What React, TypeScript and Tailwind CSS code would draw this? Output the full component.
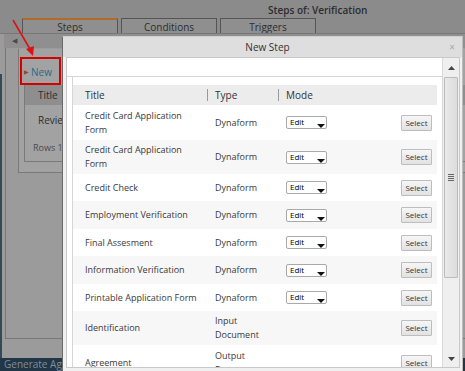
import React from "react";

const rows: { title: string[]; type: string[]; edit: boolean; h: number }[] = [
  { title: ["Credit Card Application", "Form"], type: ["Dynaform"], edit: true, h: 35 },
  { title: ["Credit Card Application", "Form"], type: ["Dynaform"], edit: true, h: 34 },
  { title: ["Credit Check"], type: ["Dynaform"], edit: true, h: 27 },
  { title: ["Employment Verification"], type: ["Dynaform"], edit: true, h: 28 },
  { title: ["Final Assesment"], type: ["Dynaform"], edit: true, h: 27 },
  { title: ["Information Verification"], type: ["Dynaform"], edit: true, h: 28 },
  { title: ["Printable Application Form"], type: ["Dynaform"], edit: true, h: 27 },
  { title: ["Identification"], type: ["Input", "Document"], edit: false, h: 34 },
  { title: ["Agreement"], type: ["Output", "Document"], edit: false, h: 36 },
];

function EditSelect() {
  return (
    <div className="relative w-[41px] h-[13px] border border-[#a9a9a9] rounded-[2px] bg-white">
      <span className="absolute left-[3px] top-[-1px] text-[8px] leading-[12px] text-black font-medium">Edit</span>
      <svg className="absolute left-[30px] top-[7px]" width="8" height="4" viewBox="0 0 8 4">
        <polygon points="0,0 8,0 4,4" fill="#111" />
      </svg>
    </div>
  );
}

function SelectBtn() {
  return (
    <div className="w-[31px] h-[16px] border border-[#bdbdbd] rounded-[1px] bg-gradient-to-b from-[#f6f6f6] to-[#e2e2e2] flex items-center justify-center text-[8px] text-[#333]">
      Select
    </div>
  );
}

export default function App() {
  return (
    <div
      className="relative w-[465px] h-[371px] overflow-hidden bg-[#8b8b8b] text-[#333]"
      style={{ fontFamily: '"Open Sans", "Noto Sans", sans-serif' }}
    >
      {/* background page (under overlay) */}
      <div className="flex flex-col h-full">
        <div className="h-[18px] shrink-0 pl-[268px] text-[10px] leading-[20px] font-semibold text-[#2d2d2d]">
          Steps of: Verification
        </div>
        <div className="h-[15px] shrink-0 flex pl-[22px] gap-[3px] items-end">
          <div className="w-[96px] h-[15px] border border-b-0 border-[#555] border-t-2 border-t-[#b26b27] bg-[#8f8f8f] text-center text-[10px] leading-[14px] text-[#2d2d2d]">
            Steps
          </div>
          <div className="w-[96px] h-[15px] border border-b-0 border-[#555] bg-[#8f8f8f] text-center text-[10px] leading-[16px] text-[#2d2d2d]">
            Conditions
          </div>
          <div className="w-[96px] h-[15px] border border-b-0 border-[#555] bg-[#8f8f8f] text-center text-[10px] leading-[16px] text-[#2d2d2d]">
            Triggers
          </div>
        </div>
        <div className="flex-1 flex bg-[#9b9b9b] border-t border-[#777]">
          <div className="w-[2px] flex flex-col">
            <div className="h-[40px]" />
            <div className="flex-1 bg-[#34495a]" />
          </div>
          <div className="flex-1 flex flex-col pl-[2px]">
            <div className="h-[14px] bg-[#8f8f8f] text-[7px] leading-[14px] pl-[8px] text-[#4a4a4a]">◀</div>
            <div className="ml-[1px] h-[291px] border-l border-b border-[#777] pl-[12px] pt-[1px]">
              <div className="h-[124px] border-l border-b border-[#7a7a7a] bg-[#a2a2a2] pl-[5px]">
                <div className="h-[36px] flex items-center pt-[10px] text-[10px] text-[#2b6a8c]">
                  <span className="text-[6px] text-[#8a4a2a] mr-[2px]">▶</span>New
                </div>
                <div className="h-[77px] border-l border-b border-[#7a7a7a]">
                  <div className="h-[20px] bg-[#8e8e8e] pl-[13px] text-[10px] leading-[20px] text-[#2d2d2d]">Title</div>
                  <div className="h-[30px] pl-[13px] text-[10px] leading-[30px] text-[#2d2d2d]">Review</div>
                  <div className="h-[26px] pl-[8px] text-[9px] leading-[26px] text-[#4a4a4a]">Rows 1-</div>
                </div>
              </div>
            </div>
          </div>
        </div>
        <div className="h-[13px] shrink-0 bg-[#213646] flex">
          <div className="w-[62px] overflow-hidden whitespace-nowrap text-[10px] leading-[12px] pl-[4px] text-[#7f8f99]">Generate Agreement</div>
        </div>
      </div>

      {/* annotation: red arrow */}
      <svg className="absolute left-0 top-0" width="60" height="60" viewBox="0 0 60 60">
        <line x1="13" y1="20" x2="30" y2="49" stroke="#d11" strokeWidth="1.6" />
        <polygon points="26,49 34,46 33,56" fill="#d11" />
      </svg>
      <div className="absolute left-[20px] top-[57px] w-[41px] h-[28px] border-2 border-[#d40000]" />

      {/* dialog */}
      <div className="absolute left-[62px] top-[36px] w-[401px] h-[340px] bg-[#f0f0f0] border-l border-[#6a6a6a] border-t border-t-[#cfcfcf] border-r border-r-[#bdbdbd] flex flex-col">
        <div className="h-[20px] shrink-0 bg-[#dedede] flex items-center justify-center relative">
          <span className="text-[10px] text-[#333] pl-[10px]">New Step</span>
          <span className="absolute right-[7px] top-[3px] text-[10px] text-[#a8a8a8]">×</span>
        </div>
        <div className="flex-1 pl-[3px] pr-[2px]">
          <div className="h-[311px] bg-white border border-[#c9c9c9] flex">
            <div className="flex-1 flex flex-col overflow-hidden">
              <div className="h-[19px] shrink-0 border-b border-[#d6d6d6]" />
              <div className="flex-1 ml-[5px] border-l border-[#d6d6d6] pt-[8px] pr-[5px] overflow-hidden">
                <div className="h-[20px] bg-[#ececec] flex items-center text-[10px] text-[#333]">
                  <div className="w-[134px] pl-[12px]">Title</div>
                  <div className="w-[71px] border-l border-[#9a9a9a] h-[12px] pl-[7px] leading-[12px]">Type</div>
                  <div className="flex-1 border-l border-[#9a9a9a] h-[12px] pl-[7px] leading-[12px]">Mode</div>
                </div>
                {rows.map((r, i) => (
                  <div
                    key={i}
                    className={`flex items-center shrink-0 text-[9px] leading-[14px] text-[#3a3a3a] ${i % 2 === 1 ? "bg-[#f7f7f7]" : "bg-white"}`}
                    style={{ height: r.h }}
                  >
                    <div className="w-[134px] pl-[12px]">
                      {r.title.map((t, j) => (
                        <div key={j}>{t}</div>
                      ))}
                    </div>
                    <div className="w-[71px] pl-[8px]">
                      {r.type.map((t, j) => (
                        <div key={j}>{t}</div>
                      ))}
                    </div>
                    <div className="w-[115px] pl-[8px]">{r.edit ? <EditSelect /> : null}</div>
                    <div className="flex-1 flex justify-start pl-[8px]">
                      <SelectBtn />
                    </div>
                  </div>
                ))}
              </div>
            </div>
            {/* scrollbar */}
            <div className="w-[17px] shrink-0 bg-[#efefef] border-l border-[#d9d9d9] flex flex-col items-center">
              <div className="h-[19px] shrink-0 flex items-center justify-center">
                <svg width="7" height="4" viewBox="0 0 7 4">
                  <polygon points="3.5,0 7,4 0,4" fill="#444" />
                </svg>
              </div>
              <div className="w-[14px] h-[201px] shrink-0 border border-[#bcbcbc] rounded-[1px] bg-gradient-to-r from-[#e9e9e9] to-[#dcdcdc] flex items-center justify-center">
                <div className="flex flex-col gap-[1px]">
                  <div className="w-[6px] h-[1px] bg-[#666]" />
                  <div className="w-[6px] h-[1px] bg-[#666]" />
                  <div className="w-[6px] h-[1px] bg-[#666]" />
                  <div className="w-[6px] h-[1px] bg-[#666]" />
                </div>
              </div>
              <div className="flex-1" />
              <div className="h-[16px] shrink-0 flex items-start justify-center pt-[6px]">
                <svg width="7" height="4" viewBox="0 0 7 4">
                  <polygon points="0,0 7,0 3.5,4" fill="#444" />
                </svg>
              </div>
            </div>
          </div>
        </div>
      </div>
    </div>
  );
}
